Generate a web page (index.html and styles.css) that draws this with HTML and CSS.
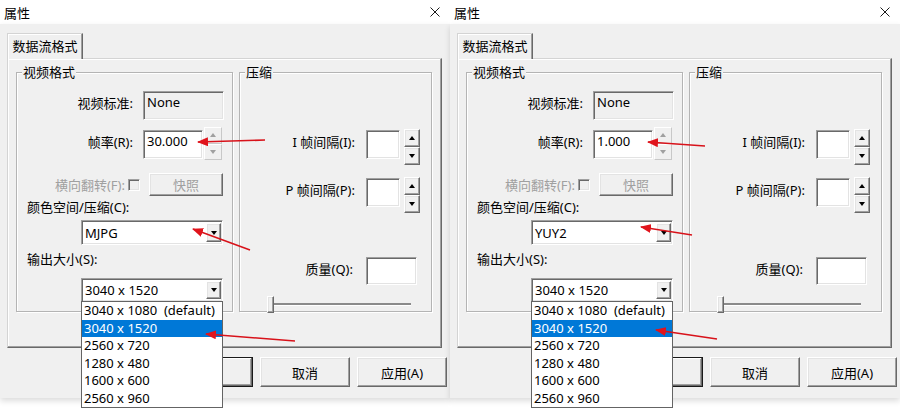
FILE: index.html
```html
<!DOCTYPE html>
<html lang="zh-CN">
<head>
    <meta charset="UTF-8">
    <meta name="viewport" content="width=device-width, initial-scale=1.0">
    <title>属性</title>
    <link rel="stylesheet" href="styles.css">
</head>
<body>
<div class="screen">

    <!-- first capture: MJPG at 30 fps -->
    <div class="dialog">
        <div class="titlebar">
            <span class="title">属性</span>
            <svg class="close" viewBox="0 0 10 10"><path d="M0.5 0.5L9.5 9.5M9.5 0.5L0.5 9.5" stroke="#1a1a1a" stroke-width="1"/></svg>
        </div>
        <div class="dialog-body">
            <div class="tab">数据流格式</div>
            <div class="tab-panel">
                <div class="group group-video">
                    <span class="group-title">视频格式</span>
                    <div class="row row-std">
                        <span class="label">视频标准:</span>
                        <div class="edit readonly std-edit">None</div>
                    </div>
                    <div class="row row-rate">
                        <span class="label">帧率(R):</span>
                        <div class="edit rate-edit">30.000</div>
                        <div class="spin spin-rate off">
                            <span class="spin-btn"><i class="tri up"></i></span>
                            <span class="spin-btn"><i class="tri down"></i></span>
                        </div>
                    </div>
                    <div class="row row-flip">
                        <span class="label off">横向翻转(F):</span>
                        <span class="check"></span>
                        <span class="button snap off">快照</span>
                    </div>
                    <div class="caption caption-color">颜色空间/压缩(C):</div>
                    <div class="combo combo-color">
                        <span class="combo-text">MJPG</span>
                        <span class="combo-btn"><i class="tri down"></i></span>
                    </div>
                    <div class="caption caption-size">输出大小(S):</div>
                    <div class="combo combo-size">
                        <span class="combo-text">3040 x 1520</span>
                        <span class="combo-btn"><i class="tri down"></i></span>
                    </div>
                </div>
                <div class="group group-compress">
                    <span class="group-title">压缩</span>
                    <div class="row row-i">
                        <span class="label">I 帧间隔(I):</span>
                        <div class="edit gap-edit"></div>
                        <div class="spin spin-gap">
                            <span class="spin-btn"><i class="tri up"></i></span>
                            <span class="spin-btn"><i class="tri down"></i></span>
                        </div>
                    </div>
                    <div class="row row-p">
                        <span class="label">P 帧间隔(P):</span>
                        <div class="edit gap-edit"></div>
                        <div class="spin spin-gap">
                            <span class="spin-btn"><i class="tri up"></i></span>
                            <span class="spin-btn"><i class="tri down"></i></span>
                        </div>
                    </div>
                    <div class="row row-q">
                        <span class="label">质量(Q):</span>
                        <div class="edit quality-edit"></div>
                    </div>
                    <div class="slider">
                        <span class="thumb"></span>
                        <span class="track"></span>
                    </div>
                </div>
            </div>
            <div class="dialog-buttons">
                <span class="button default">确定</span>
                <span class="button">取消</span>
                <span class="button">应用(A)</span>
            </div>
        </div>
        <ul class="dropdown">
            <li>3040 x 1080  (default)</li>
            <li class="selected">3040 x 1520</li>
            <li>2560 x 720</li>
            <li>1280 x 480</li>
            <li>1600 x 600</li>
            <li>2560 x 960</li>
        </ul>
        <svg class="marks" viewBox="0 0 450 413">
            <defs>
                <marker id="head-a" markerUnits="userSpaceOnUse" markerWidth="11" markerHeight="9" refX="10" refY="4.5" orient="auto">
                    <path d="M0 0L11 4.5L0 9z" fill="#e0141c"/>
                </marker>
            </defs>
            <path d="M265 140L198 142" marker-end="url(#head-a)"/>
            <path d="M250 250L193 229" marker-end="url(#head-a)"/>
            <path d="M295 341L206 334" marker-end="url(#head-a)"/>
        </svg>
    </div>

    <!-- second capture: YUY2 at 1 fps -->
    <div class="dialog">
        <div class="titlebar">
            <span class="title">属性</span>
            <svg class="close" viewBox="0 0 10 10"><path d="M0.5 0.5L9.5 9.5M9.5 0.5L0.5 9.5" stroke="#1a1a1a" stroke-width="1"/></svg>
        </div>
        <div class="dialog-body">
            <div class="tab">数据流格式</div>
            <div class="tab-panel">
                <div class="group group-video">
                    <span class="group-title">视频格式</span>
                    <div class="row row-std">
                        <span class="label">视频标准:</span>
                        <div class="edit readonly std-edit">None</div>
                    </div>
                    <div class="row row-rate">
                        <span class="label">帧率(R):</span>
                        <div class="edit rate-edit">1.000</div>
                        <div class="spin spin-rate off">
                            <span class="spin-btn"><i class="tri up"></i></span>
                            <span class="spin-btn"><i class="tri down"></i></span>
                        </div>
                    </div>
                    <div class="row row-flip">
                        <span class="label off">横向翻转(F):</span>
                        <span class="check"></span>
                        <span class="button snap off">快照</span>
                    </div>
                    <div class="caption caption-color">颜色空间/压缩(C):</div>
                    <div class="combo combo-color">
                        <span class="combo-text">YUY2</span>
                        <span class="combo-btn"><i class="tri down"></i></span>
                    </div>
                    <div class="caption caption-size">输出大小(S):</div>
                    <div class="combo combo-size">
                        <span class="combo-text">3040 x 1520</span>
                        <span class="combo-btn"><i class="tri down"></i></span>
                    </div>
                </div>
                <div class="group group-compress">
                    <span class="group-title">压缩</span>
                    <div class="row row-i">
                        <span class="label">I 帧间隔(I):</span>
                        <div class="edit gap-edit"></div>
                        <div class="spin spin-gap">
                            <span class="spin-btn"><i class="tri up"></i></span>
                            <span class="spin-btn"><i class="tri down"></i></span>
                        </div>
                    </div>
                    <div class="row row-p">
                        <span class="label">P 帧间隔(P):</span>
                        <div class="edit gap-edit"></div>
                        <div class="spin spin-gap">
                            <span class="spin-btn"><i class="tri up"></i></span>
                            <span class="spin-btn"><i class="tri down"></i></span>
                        </div>
                    </div>
                    <div class="row row-q">
                        <span class="label">质量(Q):</span>
                        <div class="edit quality-edit"></div>
                    </div>
                    <div class="slider">
                        <span class="thumb"></span>
                        <span class="track"></span>
                    </div>
                </div>
            </div>
            <div class="dialog-buttons">
                <span class="button default">确定</span>
                <span class="button">取消</span>
                <span class="button">应用(A)</span>
            </div>
        </div>
        <ul class="dropdown">
            <li>3040 x 1080  (default)</li>
            <li class="selected">3040 x 1520</li>
            <li>2560 x 720</li>
            <li>1280 x 480</li>
            <li>1600 x 600</li>
            <li>2560 x 960</li>
        </ul>
        <svg class="marks" viewBox="0 0 450 413">
            <defs>
                <marker id="head-b" markerUnits="userSpaceOnUse" markerWidth="11" markerHeight="9" refX="10" refY="4.5" orient="auto">
                    <path d="M0 0L11 4.5L0 9z" fill="#e0141c"/>
                </marker>
            </defs>
            <path d="M255 146L198 142" marker-end="url(#head-b)"/>
            <path d="M242 235L191 227" marker-end="url(#head-b)"/>
            <path d="M267 339L206 330" marker-end="url(#head-b)"/>
        </svg>
    </div>

</div>
</body>
</html>
```

FILE: styles.css
```css
* {
    margin: 0;
    padding: 0;
    box-sizing: border-box;
}
body {
    background: #fff;
    color: #000;
    font-family: "Noto Sans", "Noto Sans CJK SC", sans-serif;
    font-size: 13px;
}
.screen {
    display: flex;
    width: 900px;
    height: 413px;
    overflow: hidden;
}
.dialog {
    position: relative;
    width: 450px;
    flex: none;
}

/* window chrome */
.titlebar {
    height: 24px;
    display: flex;
    align-items: center;
    justify-content: space-between;
    padding: 0 10px 0 4px;
    background: #fff;
}
.close {
    width: 10px;
    height: 10px;
}
.dialog-body {
    height: 374px;
    padding: 9px 0 0 7px;
    background: #f0f0f0;
    box-shadow: 0 3px 6px rgba(0, 0, 0, 0.14);
}

/* tab strip */
.tab {
    position: relative;
    z-index: 1;
    width: 76px;
    height: 26px;
    margin-bottom: -1px;
    line-height: 24px;
    text-align: center;
    background: #f0f0f0;
    border: 1px solid;
    border-color: #d4d4d4 #696969 transparent #d4d4d4;
    border-bottom: none;
    box-shadow: inset -1px 0 0 #a0a0a0, inset 1px 1px 0 #fff;
}
.tab-panel {
    display: flex;
    gap: 6px;
    width: 435px;
    height: 290px;
    padding: 13px 0 0 8px;
    border: 1px solid;
    border-color: #d4d4d4 #696969 #696969 #d4d4d4;
    box-shadow: inset -1px -1px 0 #a0a0a0, inset 1px 1px 0 #fff;
}

/* group boxes */
.group {
    position: relative;
    height: 240px;
    border: 1px solid #b4b4b4;
    box-shadow: inset 1px 1px 0 #fff, 1px 1px 0 #fff;
}
.group-video {
    width: 217px;
}
.group-compress {
    width: 193px;
}
.group-title {
    position: absolute;
    top: -9px;
    left: 5px;
    padding: 0 1px;
    line-height: 16px;
    background: #f0f0f0;
}

.row {
    display: flex;
    align-items: flex-start;
}
.label {
    flex: none;
    padding-top: 2px;
    line-height: 20px;
    text-align: right;
    white-space: nowrap;
}
.off {
    color: #a0a0a0;
}

.group-video .label {
    width: 126px;
    padding-right: 10px;
}
.row-std {
    margin-top: 18px;
}
.row-rate {
    margin-top: 10px;
}
.row-flip {
    margin-top: 13px;
    align-items: center;
}
.group-video .row-flip .label {
    width: 111px;
    padding: 0 3px 0 0;
}
.caption {
    margin-left: 10px;
    line-height: 16px;
}
.caption-color {
    margin-top: 3px;
}
.caption-size {
    margin-top: 6px;
}

.group-compress .label {
    width: 126px;
    padding-right: 11px;
}
.row-i {
    margin-top: 57px;
}
.row-p {
    margin-top: 13px;
}
.row-q {
    margin-top: 44px;
}
.group-compress .row-q .label {
    padding-right: 13px;
}

/* edit boxes */
.edit {
    height: 29px;
    padding: 0 3px;
    line-height: 20px;
    background: #fff;
    border: 1px solid;
    border-color: #a0a0a0 #fff #fff #a0a0a0;
    box-shadow: inset 1px 1px 0 #696969, inset -1px -1px 0 #e3e3e3;
}
.edit.readonly {
    background: #f0f0f0;
}
.std-edit {
    width: 81px;
}
.rate-edit {
    width: 60px;
}
.gap-edit {
    width: 34px;
}
.quality-edit {
    width: 51px;
    height: 28px;
}

/* raised controls */
.button,
.spin-btn,
.combo-btn,
.thumb {
    background: #f0f0f0;
    border: 1px solid;
    border-color: #fff #696969 #696969 #fff;
    box-shadow: inset -1px -1px 0 #a0a0a0, inset 1px 1px 0 #e3e3e3;
}
.button {
    display: flex;
    align-items: center;
    justify-content: center;
    width: 90px;
    height: 30px;
}
.button.default {
    border-color: #1a1a1a;
    box-shadow: inset -1px -1px 0 #696969, inset 1px 1px 0 #fff, inset -2px -2px 0 #a0a0a0;
}
.snap {
    width: 74px;
    height: 23px;
}
.check {
    flex: none;
    width: 12px;
    height: 12px;
    margin-right: 9px;
    background: #f0f0f0;
    border: 1px solid;
    border-color: #a0a0a0 #fff #fff #a0a0a0;
    box-shadow: inset 1px 1px 0 #696969, inset -1px -1px 0 #e3e3e3;
}

/* spin buttons */
.spin {
    display: flex;
    flex-direction: column;
}
.spin-btn {
    flex: 1;
    display: flex;
    align-items: center;
    justify-content: center;
}
.spin-rate {
    width: 18px;
    height: 33px;
    margin: -3px 0 0 1px;
}
.spin-rate .spin-btn {
    border-color: #fff #c8c8c8 #c8c8c8 #fff;
    box-shadow: none;
}
.spin-gap {
    width: 16px;
    height: 36px;
    margin: -1px 0 0 4px;
}

.tri {
    display: block;
    width: 0;
    height: 0;
    border-left: 3.5px solid transparent;
    border-right: 3.5px solid transparent;
}
.tri.up {
    border-bottom: 4px solid #000;
}
.tri.down {
    border-top: 4px solid #000;
}
.off .tri.up {
    border-bottom-color: #a0a0a0;
}
.off .tri.down {
    border-top-color: #a0a0a0;
}

/* combo boxes */
.combo {
    display: flex;
    align-items: stretch;
    width: 142px;
    margin-left: 64px;
    padding: 2px 1px 2px 2px;
    background: #fff;
    border: 1px solid;
    border-color: #a0a0a0 #fff #fff #a0a0a0;
    box-shadow: inset 1px 1px 0 #696969, inset -1px -1px 0 #e3e3e3;
}
.combo-color {
    height: 25px;
    margin-top: 5px;
}
.combo-size {
    height: 24px;
    margin-top: 11px;
}
.combo-text {
    flex: 1;
    display: flex;
    align-items: center;
    padding-left: 1px;
}
.combo-btn {
    width: 15px;
    display: flex;
    align-items: center;
    justify-content: center;
}

/* trackbar */
.slider {
    display: flex;
    align-items: center;
    width: 144px;
    height: 19px;
    margin: 10px 0 0 27px;
}
.thumb {
    width: 7px;
    height: 17px;
}
.track {
    flex: 1;
    height: 3px;
    border-top: 2px solid #8a8a8a;
    border-bottom: 1px solid #fff;
}

.dialog-buttons {
    display: flex;
    justify-content: flex-end;
    gap: 7px;
    margin-top: 9px;
    padding-right: 3px;
}

/* open list of the size combo */
.dropdown {
    position: absolute;
    z-index: 5;
    top: 301px;
    left: 81px;
    width: 142px;
    list-style: none;
    background: #fff;
    border: 1px solid #646464;
}
.dropdown li {
    height: 17.5px;
    padding-left: 2px;
    line-height: 17.5px;
    white-space: pre;
}
.dropdown li.selected {
    background: #0078d7;
    color: #fff;
}

/* red call-out arrows */
.marks {
    position: absolute;
    z-index: 6;
    top: 0;
    left: 0;
    width: 450px;
    height: 413px;
    pointer-events: none;
}
.marks path {
    fill: none;
    stroke: #d8121a;
    stroke-width: 1.6;
}
.marks marker path {
    fill: #e0141c;
    stroke: none;
}
```
